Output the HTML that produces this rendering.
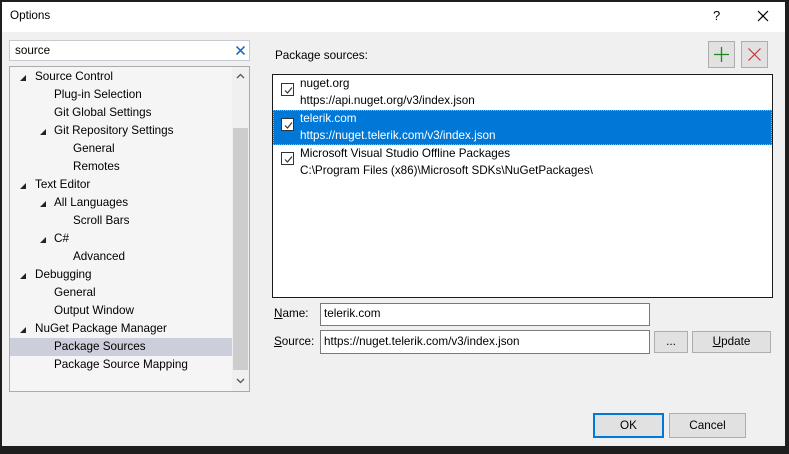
<!DOCTYPE html>
<html><head><style>
*{margin:0;padding:0;box-sizing:border-box}
body{width:789px;height:454px;background:#1e1e1e;position:relative;overflow:hidden;font-family:"Liberation Sans",sans-serif;font-size:11.7px;color:#000}
.a{position:absolute}
#dlg{left:2px;top:2px;width:783px;height:444px;background:#f0f0f0}
.t{position:absolute;white-space:nowrap;line-height:14px}
.tri{position:absolute;width:0;height:0;border-left:6px solid transparent;border-bottom:6px solid #222}
.cb{position:absolute;width:13px;height:13px;border:1px solid #333;background:#fff}
.cb svg{position:absolute;left:1px;top:1px}
.btn{position:absolute;background:#e1e1e1;border:1px solid #adadad;text-align:center}
</style></head><body>
<div id="dlg" class="a"></div>
<div class="a" style="left:2px;top:2px;width:783px;height:30px;background:#fff"></div>
<div class="t" style="left:10px;top:9px">Options</div>
<div class="t" style="left:713px;top:9px;font-size:13px">?</div>
<svg class="a" style="left:757px;top:10px" width="12" height="12"><path d="M1 1L11 11M11 1L1 11" stroke="#000" stroke-width="1.2"/></svg>

<div class="a" style="left:9px;top:40px;width:241px;height:21px;background:#fff;border:1px solid #c8c8d0"></div>
<div class="t" style="left:15px;top:44px">source</div>
<svg class="a" style="left:236px;top:46px" width="9" height="9"><path d="M0.5 0.5L8.5 8.5M8.5 0.5L0.5 8.5" stroke="#1a6fc4" stroke-width="1.6"/></svg>

<div class="a" style="left:9px;top:66px;width:241px;height:326px;background:#f5f5f5;border:1px solid #ababab"></div>
<div class="a" style="left:232px;top:67px;width:17px;height:324px;background:#f0f0f0"></div>
<div class="a" style="left:233px;top:128px;width:15px;height:242px;background:#cdcdcd"></div>
<svg class="a" style="left:236px;top:73px" width="9" height="6"><path d="M1 5L4.5 1.5L8 5" stroke="#555" fill="none" stroke-width="1.3"/></svg>
<svg class="a" style="left:236px;top:378px" width="9" height="6"><path d="M1 1L4.5 4.5L8 1" stroke="#555" fill="none" stroke-width="1.3"/></svg>
<div class="a" style="left:10px;top:338px;width:222px;height:18px;background:#cccedb"></div>

<div class="tri" style="left:20px;top:75px"></div><div class="t" style="left:35px;top:70px">Source Control</div>
<div class="t" style="left:54px;top:88px">Plug-in Selection</div>
<div class="t" style="left:54px;top:106px">Git Global Settings</div>
<div class="tri" style="left:40px;top:129px"></div><div class="t" style="left:54px;top:124px">Git Repository Settings</div>
<div class="t" style="left:73px;top:142px">General</div>
<div class="t" style="left:73px;top:160px">Remotes</div>
<div class="tri" style="left:20px;top:183px"></div><div class="t" style="left:35px;top:178px">Text Editor</div>
<div class="tri" style="left:40px;top:201px"></div><div class="t" style="left:54px;top:196px">All Languages</div>
<div class="t" style="left:73px;top:214px">Scroll Bars</div>
<div class="tri" style="left:40px;top:237px"></div><div class="t" style="left:54px;top:232px">C#</div>
<div class="t" style="left:73px;top:250px">Advanced</div>
<div class="tri" style="left:20px;top:273px"></div><div class="t" style="left:35px;top:268px">Debugging</div>
<div class="t" style="left:54px;top:286px">General</div>
<div class="t" style="left:54px;top:304px">Output Window</div>
<div class="tri" style="left:20px;top:327px"></div><div class="t" style="left:35px;top:322px">NuGet Package Manager</div>
<div class="t" style="left:54px;top:340px">Package Sources</div>
<div class="t" style="left:54px;top:358px">Package Source Mapping</div>

<div class="t" style="left:275px;top:49px">Package sources:</div>
<div class="btn" style="left:708px;top:41px;width:27px;height:27px"></div>
<svg class="a" style="left:714px;top:47px" width="15" height="15"><path d="M7.5 0V15M0 7.5H15" stroke="#1e8a1e" stroke-width="1.3"/></svg>
<div class="btn" style="left:741px;top:41px;width:27px;height:27px"></div>
<svg class="a" style="left:748px;top:48px" width="13" height="13"><path d="M0.5 0.5L12.5 12.5M12.5 0.5L0.5 12.5" stroke="#c0393b" stroke-width="1.2"/></svg>

<div class="a" style="left:272px;top:74px;width:501px;height:224px;background:#fff;border:1px solid #1a1a1a"></div>
<div class="a" style="left:273px;top:110px;width:499px;height:35px;background:#0078d7;border:1px dotted #e0a060"></div>
<div class="cb" style="left:281px;top:83px"><svg width="11" height="11"><path d="M2 5.5L4.5 8L9 2.5" stroke="#333" fill="none" stroke-width="1.2"/></svg></div>
<div class="t" style="left:300px;top:77px">nuget.org</div>
<div class="t" style="left:300px;top:94px">https://api.nuget.org/v3/index.json</div>
<div class="cb" style="left:281px;top:118px"><svg width="11" height="11"><path d="M2 5.5L4.5 8L9 2.5" stroke="#333" fill="none" stroke-width="1.2"/></svg></div>
<div class="t" style="left:300px;top:112px;color:#fff">telerik.com</div>
<div class="t" style="left:300px;top:129px;color:#fff">https://nuget.telerik.com/v3/index.json</div>
<div class="cb" style="left:281px;top:152px"><svg width="11" height="11"><path d="M2 5.5L4.5 8L9 2.5" stroke="#333" fill="none" stroke-width="1.2"/></svg></div>
<div class="t" style="left:300px;top:147px">Microsoft Visual Studio Offline Packages</div>
<div class="t" style="left:300px;top:164px">C:\Program Files (x86)\Microsoft SDKs\NuGetPackages\</div>

<div class="t" style="left:274px;top:307px"><u>N</u>ame:</div>
<div class="a" style="left:320px;top:303px;width:330px;height:23px;background:#fff;border:1px solid #7a7a7a"></div>
<div class="t" style="left:324px;top:307px">telerik.com</div>
<div class="t" style="left:274px;top:335px"><u>S</u>ource:</div>
<div class="a" style="left:320px;top:330px;width:330px;height:24px;background:#fff;border:1px solid #7a7a7a"></div>
<div class="t" style="left:324px;top:335px">https://nuget.telerik.com/v3/index.json</div>
<div class="btn" style="left:654px;top:331px;width:34px;height:22px;line-height:20px">...</div>
<div class="btn" style="left:692px;top:331px;width:79px;height:22px;line-height:20px"><u>U</u>pdate</div>

<div class="btn" style="left:593px;top:413px;width:71px;height:25px;line-height:21px;border:2px solid #0078d7">OK</div>
<div class="btn" style="left:669px;top:413px;width:77px;height:25px;line-height:23px">Cancel</div>
</body></html>
